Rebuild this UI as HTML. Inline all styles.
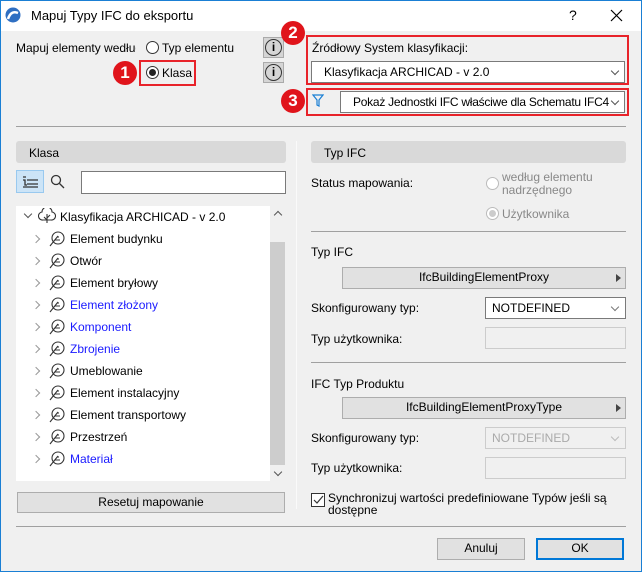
<!DOCTYPE html>
<html><head><meta charset="utf-8"><style>
*{box-sizing:border-box;margin:0;padding:0}
body{width:642px;height:572px;overflow:hidden;background:#f0f0f0;font-family:"Liberation Sans",sans-serif;font-size:12px;color:#000;position:relative}
.a{position:absolute}
.t{position:absolute;white-space:nowrap;line-height:14px}
.frame{left:0;top:0;width:642px;height:572px;border:1px solid #1a7fd4;pointer-events:none}
.hdr{background:#d9d9d9;border-radius:3px;height:22px}
.sep{height:1px;background:#a0a0a0}
.sel{background:#fff;border:1px solid #7a7a7a}
.btn{background:#e1e1e1;border:1px solid #adadad;text-align:center;line-height:19px}
.red{border:2px solid #e8232a}
.circ{width:24px;height:24px;border-radius:50%;background:#e0141b;color:#fff;font-size:17px;text-align:center;line-height:24px;font-weight:bold}
.rad{width:13px;height:13px;border-radius:50%;border:1px solid #333;background:#fff}
.chev{position:absolute;width:6px;height:6px;border-right:1.3px solid #555;border-bottom:1.3px solid #555;transform:rotate(45deg)}
.tr{position:absolute;width:6px;height:6px;border-right:1.5px solid #999;border-bottom:1.5px solid #999;transform:rotate(-45deg)}
.blue{color:#1a1aff}
</style></head><body>
<div class="a" style="left:0;top:0;width:642px;height:31px;background:#fff"></div>
<svg class="a" style="left:5px;top:7px" width="16" height="16"><circle cx="8" cy="8" r="7.5" fill="#2f6fc2"/><path d="M3 12 Q6 3 13 6" stroke="#fff" stroke-width="2.5" fill="none"/></svg>
<div class="t" style="left:31px;top:9px;font-size:13px">Mapuj Typy IFC do eksportu</div>
<div class="t" style="left:569px;top:8px;font-size:14px">?</div>
<svg class="a" style="left:610px;top:9px" width="13" height="13"><path d="M1 1L12 12M12 1L1 12" stroke="#000" stroke-width="1.2"/></svg>

<div class="t" style="left:16px;top:41px;width:120px;overflow:hidden">Mapuj elementy według</div>
<div class="rad a" style="left:146px;top:41px"></div>
<div class="t" style="left:162px;top:41px">Typ elementu</div>
<div class="a red" style="left:139px;top:60px;width:57px;height:26px"></div>
<div class="rad a" style="left:146px;top:66px"></div><div class="a" style="left:149px;top:69px;width:7px;height:7px;border-radius:50%;background:#222"></div>
<div class="t" style="left:162px;top:66px">Klasa</div>
<div class="circ a" style="left:113px;top:61px">1</div>
<div class="a" style="left:263px;top:37px;width:21px;height:21px;background:#d5d5d5;border:1px solid #aaa"></div><div class="a" style="left:265px;top:39px;width:17px;height:17px;border:1.3px solid #333;border-radius:50%;text-align:center;font-weight:bold;line-height:15px;font-size:12px">i</div>
<div class="a" style="left:263px;top:62px;width:21px;height:21px;background:#d5d5d5;border:1px solid #aaa"></div><div class="a" style="left:265px;top:64px;width:17px;height:17px;border:1.3px solid #333;border-radius:50%;text-align:center;font-weight:bold;line-height:15px;font-size:12px">i</div>

<div class="a red" style="left:306px;top:35px;width:323px;height:50px"></div>
<div class="t" style="left:312px;top:41px">Źródłowy System klasyfikacji:</div>
<div class="a sel" style="left:311px;top:61px;width:314px;height:22px"></div>
<div class="t" style="left:324px;top:65px">Klasyfikacja ARCHICAD - v 2.0</div>
<div class="chev" style="left:612px;top:68px"></div>
<div class="circ a" style="left:281px;top:21px">2</div>
<div class="a red" style="left:306px;top:88px;width:323px;height:28px"></div>
<svg class="a" style="left:312px;top:94px" width="12" height="14"><path d="M1 1H11L7 6V12L5 11V6Z" fill="none" stroke="#1a7fd4" stroke-width="1.2"/></svg>
<div class="a sel" style="left:340px;top:91px;width:285px;height:22px"></div>
<div class="t" style="left:353px;top:95px;letter-spacing:-0.25px;width:258px;overflow:hidden">Pokaż Jednostki IFC właściwe dla Schematu IFC4</div>
<div class="chev" style="left:612px;top:98px"></div>
<div class="circ a" style="left:281px;top:89px">3</div>

<div class="a sep" style="left:16px;top:126px;width:610px"></div>

<div class="a hdr" style="left:16px;top:141px;width:270px"></div>
<div class="t" style="left:29px;top:146px">Klasa</div>
<div class="a" style="left:16px;top:170px;width:28px;height:23px;background:#cce4f7;border:1px solid #99c9ef"></div>
<svg class="a" style="left:22px;top:176px" width="17" height="12"><path d="M1 1h3M1 4h2v5h2M5 4h11M5 8h11M1 11h15" stroke="#333" stroke-width="1.3" fill="none"/></svg>
<svg class="a" style="left:50px;top:174px" width="15" height="15"><circle cx="6" cy="6" r="4.5" fill="none" stroke="#333" stroke-width="1.3"/><path d="M9.5 9.5L14 14" stroke="#333" stroke-width="1.3"/></svg>
<div class="a" style="left:81px;top:171px;width:205px;height:23px;background:#fff;border:1px solid #7a7a7a"></div>

<div class="a" style="left:16px;top:206px;width:254px;height:275px;background:#fff"></div>
<div class="a" style="left:270px;top:242px;width:15px;height:223px;background:#cdcdcd"></div>
<div class="chev" style="left:275px;top:212px;transform:rotate(-135deg)"></div>
<div class="chev" style="left:275px;top:469px"></div>
<div class="chev" style="left:25px;top:211px"></div>
<svg class="a" style="left:38px;top:208px" width="18" height="16"><path d="M9 15V6M9 12L6 9M9 10L12 7M5 12A4 4 0 0 1 4 4A5 5 0 0 1 14 4A4 4 0 0 1 13 12Z" fill="none" stroke="#333" stroke-width="1.1"/></svg>
<div class="t" style="left:60px;top:210px">Klasyfikacja ARCHICAD - v 2.0</div>

<div id="items"></div>
<div class="a btn" style="left:17px;top:492px;width:268px;height:21px">Resetuj mapowanie</div>

<div class="a" style="left:296px;top:141px;width:330px;height:368px;border-left:1px solid #fafafa"></div>
<div class="a hdr" style="left:311px;top:141px;width:315px"></div>
<div class="t" style="left:324px;top:146px">Typ IFC</div>
<div class="t" style="left:311px;top:176px">Status mapowania:</div>
<div class="rad a" style="left:486px;top:177px;border-color:#bbb"></div>
<div class="t" style="left:502px;top:170px;color:#888">według elementu</div>
<div class="t" style="left:502px;top:183px;color:#888">nadrzędnego</div>
<div class="rad a" style="left:486px;top:207px;border-color:#bbb"></div><div class="a" style="left:489px;top:210px;width:7px;height:7px;border-radius:50%;background:#ccc"></div>
<div class="t" style="left:502px;top:207px;color:#888">Użytkownika</div>
<div class="a sep" style="left:311px;top:231px;width:315px"></div>
<div class="t" style="left:311px;top:245px">Typ IFC</div>
<div class="a btn" style="left:342px;top:267px;width:284px;height:22px">IfcBuildingElementProxy</div>
<svg class="a" style="left:616px;top:274px" width="5" height="8"><path d="M0 0L5 4L0 8Z" fill="#444"/></svg>
<div class="t" style="left:311px;top:301px">Skonfigurowany typ:</div>
<div class="a sel" style="left:485px;top:297px;width:141px;height:22px"></div>
<div class="t" style="left:492px;top:301px">NOTDEFINED</div>
<div class="chev" style="left:612px;top:304px;border-color:#777"></div>
<div class="t" style="left:311px;top:332px">Typ użytkownika:</div>
<div class="a" style="left:485px;top:327px;width:141px;height:22px;border:1px solid #ccc"></div>
<div class="a sep" style="left:311px;top:362px;width:315px"></div>
<div class="t" style="left:311px;top:377px">IFC Typ Produktu</div>
<div class="a btn" style="left:342px;top:397px;width:284px;height:22px">IfcBuildingElementProxyType</div>
<svg class="a" style="left:616px;top:404px" width="5" height="8"><path d="M0 0L5 4L0 8Z" fill="#444"/></svg>
<div class="t" style="left:311px;top:431px">Skonfigurowany typ:</div>
<div class="a" style="left:485px;top:427px;width:141px;height:22px;border:1px solid #ccc"></div>
<div class="t" style="left:492px;top:431px;color:#aaa">NOTDEFINED</div>
<div class="chev" style="left:612px;top:434px;border-color:#bbb"></div>
<div class="t" style="left:311px;top:461px">Typ użytkownika:</div>
<div class="a" style="left:485px;top:457px;width:141px;height:22px;border:1px solid #ccc"></div>
<div class="a" style="left:311px;top:493px;width:14px;height:14px;border:1px solid #333;background:#fff"></div>
<svg class="a" style="left:313px;top:495px" width="11" height="10"><path d="M1 5L4 8L10 1" stroke="#333" stroke-width="1.2" fill="none"/></svg>
<div class="t" style="left:328px;top:491px">Synchronizuj wartości predefiniowane Typów jeśli są</div>
<div class="t" style="left:328px;top:503px">dostępne</div>

<div class="a sep" style="left:16px;top:526px;width:610px"></div>
<div class="a btn" style="left:437px;top:538px;width:88px;height:22px">Anuluj</div>
<div class="a btn" style="left:536px;top:538px;width:88px;height:22px;border:2px solid #0078d7;line-height:17px">OK</div>
<div class="a frame"></div>
<script>
var it=[["Element budynku",0],["Otwór",0],["Element bryłowy",0],["Element złożony",1],["Komponent",1],["Zbrojenie",1],["Umeblowanie",0],["Element instalacyjny",0],["Element transportowy",0],["Przestrzeń",0],["Materiał",1]];
var h="";it.forEach(function(x,i){var y=239+i*22;
h+='<div class="tr" style="left:33px;top:'+(y-3)+'px"></div>';
h+='<svg class="a" style="left:49px;top:'+(y-8)+'px" width="16" height="16"><circle cx="9" cy="7" r="6" fill="none" stroke="#333" stroke-width="1.1"/><path d="M1 15L9 5M6 9H11M8 6H10" stroke="#333" stroke-width="1.1" fill="none"/></svg>';
h+='<div class="t'+(x[1]?' blue':'')+'" style="left:70px;top:'+(y-7)+'px">'+x[0]+'</div>';});
document.getElementById("items").innerHTML=h;
</script>
</body></html>
